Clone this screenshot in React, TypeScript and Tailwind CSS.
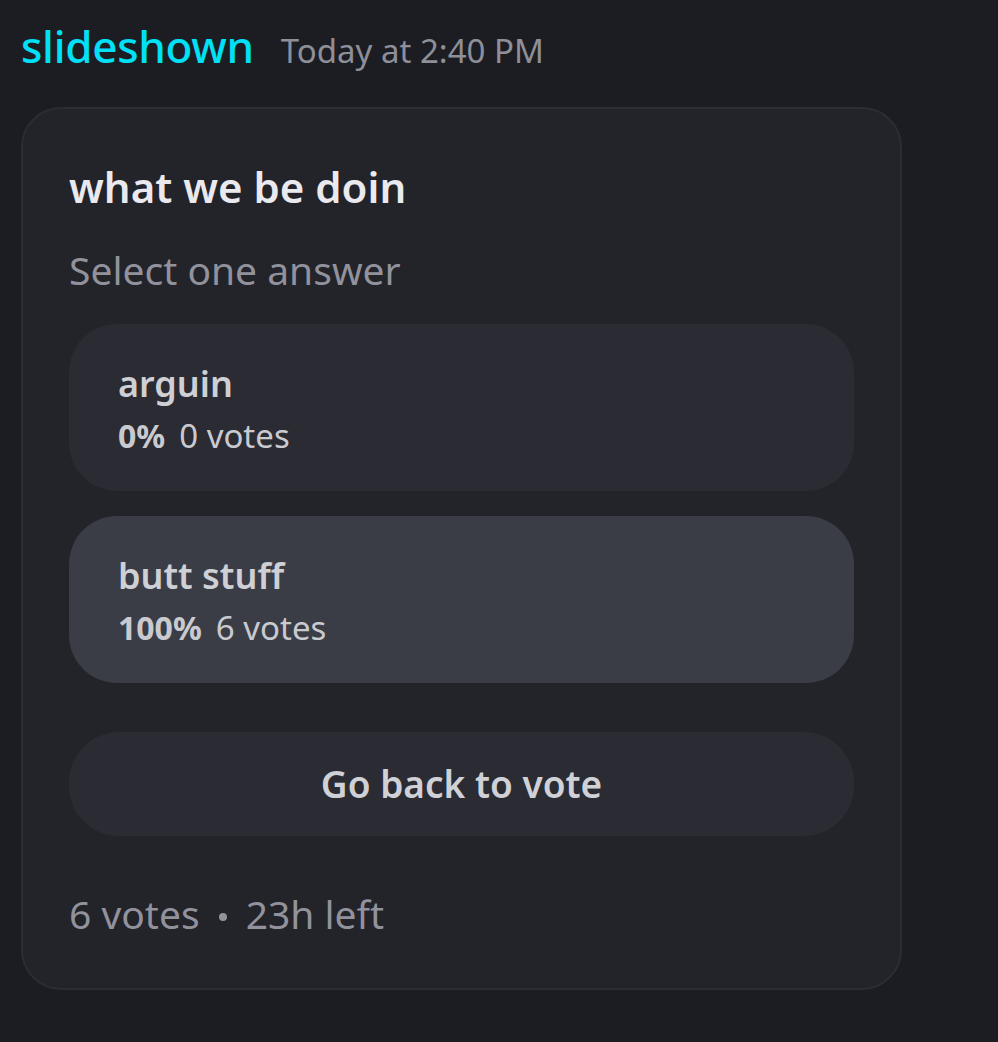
import React from "react";

export default function App() {
  const font = { fontFamily: '"Noto Sans", "Open Sans", sans-serif' };
  return (
    <div className="min-h-[1042px] w-[998px] bg-[#1c1d22] text-white" style={font}>
      <div className="pl-[21px] pt-[16px]">
        <div className="flex items-baseline gap-[27px] h-[60px]">
          <span className="text-[44px] font-medium leading-[60px] text-[#00e1f7] tracking-[-0.3px]">slideshown</span>
          <span className="text-[33px] leading-[60px] text-[#8e8f99]">Today at 2:40 PM</span>
        </div>
        <div className="mt-[31px] w-[881px] rounded-[40px] border-2 border-[#2c2d33] bg-[#23232a] px-[46px] pt-[52px] pb-[48px]">
          <div className="text-[42px] font-semibold leading-[52px] text-[#e9e9ee]">what we be doin</div>
          <div className="mt-[31px] text-[39px] leading-[52px] text-[#91929c]">Select one answer</div>
          <div className="mt-[28px] flex flex-col gap-[25px]">
            <div className="h-[167px] rounded-[48px] bg-[#2b2b33] pl-[49px] pt-[36px]">
              <div className="text-[36px] font-semibold leading-[48px] text-[#cfd0d6]">arguin</div>
              <div className="mt-[6px] flex items-baseline gap-[14px] leading-[44px] text-[#c9cad0]">
                <span className="text-[32px] font-bold">0%</span>
                <span className="text-[33px]">0 votes</span>
              </div>
            </div>
            <div className="h-[167px] rounded-[48px] bg-[#3b3d46] pl-[49px] pt-[36px]">
              <div className="text-[36px] font-semibold leading-[48px] text-[#cfd0d6]">butt stuff</div>
              <div className="mt-[6px] flex items-baseline gap-[14px] leading-[44px] text-[#c9cad0]">
                <span className="text-[32px] font-bold">100%</span>
                <span className="text-[33px]">6 votes</span>
              </div>
            </div>
          </div>
          <button className="mt-[49px] flex h-[104px] w-full items-center justify-center rounded-[50px] bg-[#2b2b33] text-[37px] font-semibold text-[#d0d1d7]">
            Go back to vote
          </button>
          <div className="mt-[52px] flex items-center gap-[19px] text-[39px] leading-[52px] text-[#91929c]">
            <span>6 votes</span>
            <span className="mt-[6px] h-[8px] w-[8px] rounded-full bg-[#91929c]"></span>
            <span>23h left</span>
          </div>
        </div>
      </div>
    </div>
  );
}
